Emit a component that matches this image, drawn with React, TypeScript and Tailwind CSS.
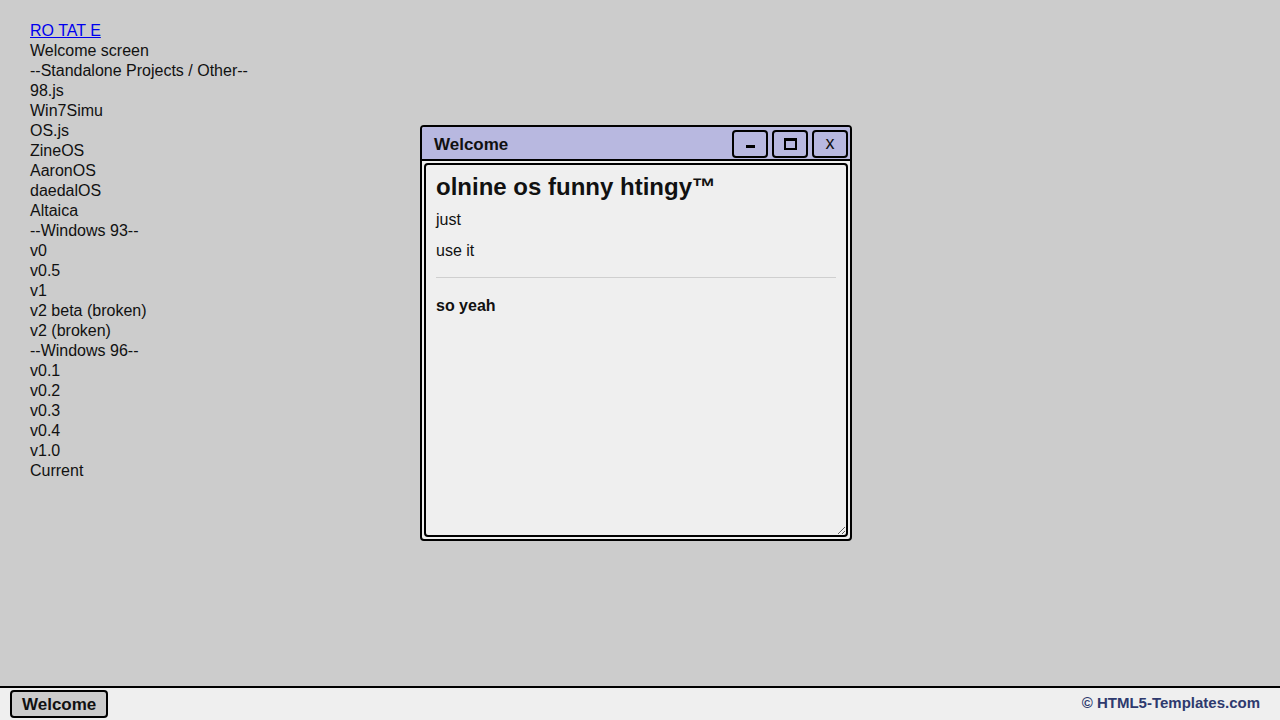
import React from "react"

const links = [
  "Welcome screen",
  "--Standalone Projects / Other--",
  "98.js",
  "Win7Simu",
  "OS.js",
  "ZineOS",
  "AaronOS",
  "daedalOS",
  "Altaica",
  "--Windows 93--",
  "v0",
  "v0.5",
  "v1",
  "v2 beta (broken)",
  "v2 (broken)",
  "--Windows 96--",
  "v0.1",
  "v0.2",
  "v0.3",
  "v0.4",
  "v1.0",
  "Current",
]

function TitleButton({ children }: { children: React.ReactNode }) {
  return (
    <button className="w-[36px] h-[28px] flex items-center justify-center border-2 border-black rounded-[4px] bg-[#b8b8e0] text-[18px] leading-none text-[#111]">
      {children}
    </button>
  )
}

export default function App() {
  return (
    <div
      className="h-screen w-full flex flex-col bg-[#cccccc] text-[#111] overflow-hidden"
      style={{ fontFamily: '"Liberation Sans", Arial, sans-serif' }}
    >
      <div className="relative flex-1">
        <ul className="pt-[21px] pl-[30px] text-[16px] leading-[20px]">
          <li>
            <a href="#" className="text-[#0000ee] underline">
              RO TAT E
            </a>
          </li>
          {links.map((l) => (
            <li key={l}>{l}</li>
          ))}
        </ul>

        <div className="absolute left-[420px] top-[125px] w-[432px] h-[416px] flex flex-col border-2 border-black rounded-[4px] bg-[#efefef] overflow-hidden">
          <div className="h-[34px] flex items-center justify-between pl-[12px] pr-[2px] pt-[1px] bg-[#b8b8e0] border-b-2 border-black">
            <span className="font-bold text-[17px] mt-[3px]">Welcome</span>
            <div className="flex gap-[4px]">
              <TitleButton>
                <span className="block w-[9px] h-[3px] bg-black mt-[6px]" />
              </TitleButton>
              <TitleButton>
                <span className="block w-[13px] h-[12px] border-2 border-t-[3px] border-black" />
              </TitleButton>
              <TitleButton>
                <span className="text-[18px] -mt-[1px]">x</span>
              </TitleButton>
            </div>
          </div>
          <div className="flex-1 p-[2px] min-h-0">
            <div className="h-full border-2 border-black rounded-[4px] px-[10px] pt-[8px] overflow-auto resize bg-[#efefef]">
              <h1 className="text-[24px] leading-[28px] font-bold">olnine os funny htingy™</h1>
              <p className="mt-[9px] text-[16px] leading-[20px]">just</p>
              <p className="mt-[11px] text-[16px] leading-[20px]">use it</p>
              <hr className="mt-[16px] border-t border-[#cfcfcf]" />
              <p className="mt-[18px] text-[16px] leading-[20px] font-bold">so yeah</p>
            </div>
          </div>
        </div>
      </div>

      <div className="h-[34px] flex items-start justify-between border-t-2 border-black bg-[#efefef] pl-[10px] pr-[20px]">
        <button className="h-[28px] mt-[2px] px-[10px] bg-[#cccccc] border-2 border-black rounded-[4px] font-bold text-[17px] leading-none">
          Welcome
        </button>
        <span className="mt-[6px] font-bold text-[15px] leading-[18px] text-[#2e3a6e]">© HTML5-Templates.com</span>
      </div>
    </div>
  )
}
